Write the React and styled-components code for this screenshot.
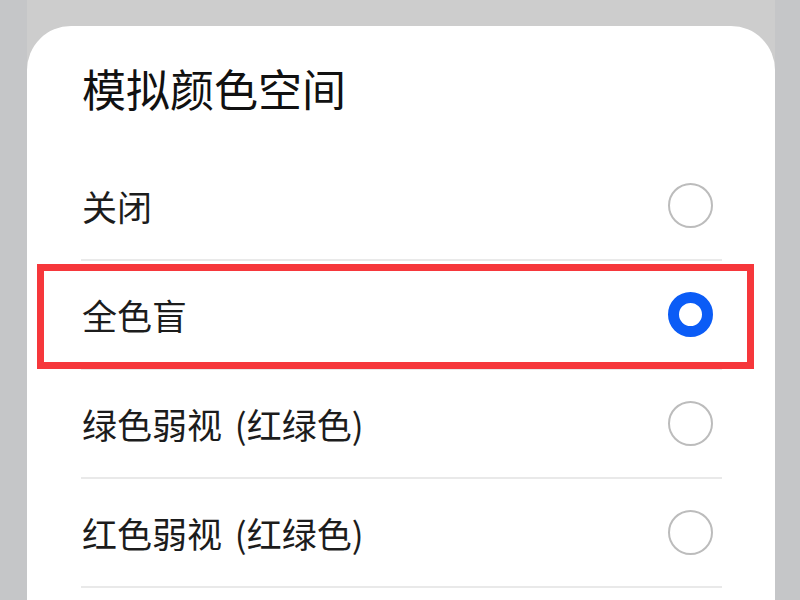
import React from 'react';
import styled, { createGlobalStyle } from 'styled-components';

const GlobalStyle = createGlobalStyle`
  html, body {
    margin: 0;
    padding: 0;
    background: #c5c6c8;
  }
  body {
    font-family: "Noto Sans CJK SC", "Noto Sans", sans-serif;
  }
`;

const Screen = styled.div`
  width: 800px;
  height: 600px;
  overflow: hidden;
  background: #c5c6c8;
`;

const Column = styled.div`
  box-sizing: border-box;
  width: 748px;
  height: 600px;
  margin-left: 27px;
  padding-top: 26px;
  background: #cdcdcd;
`;

const Card = styled.div`
  box-sizing: border-box;
  height: 100%;
  background: #ffffff;
  border-radius: 44px 44px 0 0;
  padding: 0 53px 0 54px;
`;

const Title = styled.h1`
  box-sizing: border-box;
  height: 126px;
  margin: 0;
  padding-top: 40px;
  padding-left: 1px;
  font-size: 44px;
  line-height: 44px;
  font-weight: 400;
  color: #111111;
`;

const Row = styled.div`
  position: relative;
  box-sizing: border-box;
  display: flex;
  align-items: center;
  justify-content: space-between;
  height: 109px;
  border-bottom: 2px solid #e9e9e9;
`;

const Label = styled.span`
  padding-left: 1px;
  font-size: 35px;
  line-height: 35px;
  word-spacing: 5px;
  color: #1c1c1c;
`;

const Radio = styled.span`
  box-sizing: border-box;
  width: 45px;
  height: 45px;
  margin-right: 9px;
  border-radius: 50%;
  border: ${(p) => (p.checked ? '11px solid #0b5cf6' : '2px solid #bcbcbc')};
  background: #ffffff;
`;

const Highlight = styled.div`
  position: absolute;
  top: 3px;
  bottom: -1px;
  left: -44px;
  right: -32px;
  border: 7px solid #f6373b;
  pointer-events: none;
`;

const options = [
  { label: '关闭', checked: false },
  { label: '全色盲', checked: true, marked: true },
  { label: '绿色弱视 (红绿色)', checked: false },
  { label: '红色弱视 (红绿色)', checked: false },
];

const App = () => (
  <Screen>
    <GlobalStyle />
    <Column>
      <Card>
        <Title>模拟颜色空间</Title>
        {options.map((o) => (
          <Row key={o.label}>
            <Label>{o.label}</Label>
            <Radio checked={o.checked} />
            {o.marked && <Highlight />}
          </Row>
        ))}
      </Card>
    </Column>
  </Screen>
);

export default App;
